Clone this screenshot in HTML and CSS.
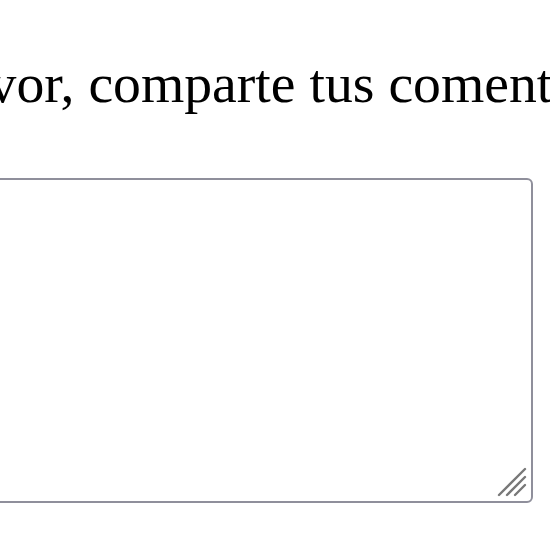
FILE: index.html
```html
<!DOCTYPE html>
<html lang="es">
<head>
<meta charset="utf-8">
<title>Comentarios</title>
<link rel="stylesheet" href="styles.css">
</head>
<body>
<div class="page">
  <label class="prompt" for="feedback">Por favor, comparte tus comentarios</label>
  <div class="field">
    <textarea id="feedback" class="box"></textarea>
    <svg class="grip" width="30" height="30" viewBox="0 0 30 30" aria-hidden="true">
      <line x1="2" y1="28" x2="28" y2="2" />
      <line x1="10" y1="28" x2="28" y2="10" />
      <line x1="18" y1="28" x2="28" y2="18" />
    </svg>
  </div>
</div>
</body>
</html>
```
FILE: styles.css
```css
html, body {
  margin: 0;
  padding: 0;
  background: #ffffff;
  overflow: hidden;
}
.page {
  width: 720px;
  margin-left: -146px;
  padding-top: 53px;
}
.prompt {
  display: block;
  font-family: "Liberation Serif", "Times New Roman", serif;
  font-size: 55.7px;
  line-height: 60px;
  color: #000;
  white-space: nowrap;
}
.field {
  position: relative;
  margin-top: 65px;
  width: 679px;
  height: 325px;
}
.box {
  display: block;
  box-sizing: border-box;
  width: 100%;
  height: 100%;
  margin: 0;
  border: 2px solid #8f8f9b;
  border-radius: 6px;
  background: #fff;
  resize: none;
  outline: none;
}
.grip {
  position: absolute;
  right: 6px;
  bottom: 6px;
  stroke: #787878;
  stroke-width: 2.4;
  stroke-linecap: round;
}
```
